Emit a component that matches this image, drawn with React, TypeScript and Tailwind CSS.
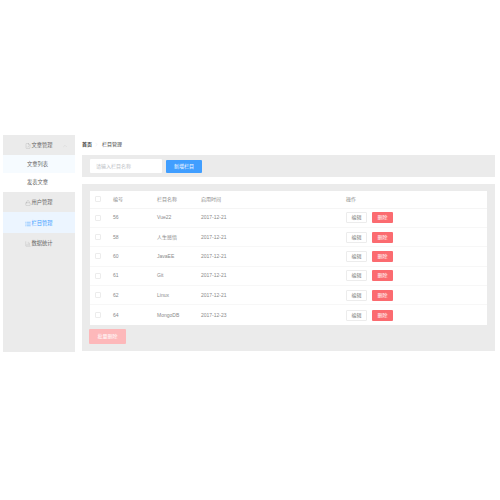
import React from 'react';
import { ChevronUp, ChevronRight, FileCheck, Lock, List, BarChart3 } from 'lucide-react';

const rows = [
    { id: 56, name: 'Vue22', date: '2017-12-21' },
    { id: 58, name: '人生感悟', date: '2017-12-21' },
    { id: 60, name: 'JavaEE', date: '2017-12-21' },
    { id: 61, name: 'Git', date: '2017-12-21' },
    { id: 62, name: 'Linux', date: '2017-12-21' },
    { id: 64, name: 'MongoDB', date: '2017-12-23' },
];

const Checkbox = () => <span className="block w-[6px] h-[6px] rounded-[1px] border-[0.5px] border-[#ececec] bg-white" />;

const App = () => {
    return (
        <div className="w-[500px] h-[500px] bg-white flex items-start pt-[135px] pl-[3px] text-[5px] leading-none text-[#8a8a8a] font-['Liberation_Sans','Noto_Sans_CJK_SC',sans-serif]">
            {/* Sidebar */}
            <aside className="w-[72px] h-[217px] shrink-0 bg-[#ebebeb] text-[5.25px] text-[#666]">
                <div className="h-[20px] pt-[1px] relative flex items-center justify-center gap-[1px] pr-[1px]">
                    <FileCheck size={6} strokeWidth={1} className="text-[#999]" />
                    <span>文章管理</span>
                    <ChevronUp size={6} strokeWidth={1} className="absolute right-[7px] text-[#bbb]" />
                </div>
                <div className="h-[18px] pt-[1px] flex items-center justify-center bg-[#f6fbff] pr-[3px]">文章列表</div>
                <div className="h-[19px] pt-[1px] flex items-center justify-center bg-white pr-[3px]">发表文章</div>
                <div className="h-[20px] pt-[1px] flex items-center justify-center gap-[1px] pr-[1px]">
                    <Lock size={6} strokeWidth={1} className="text-[#999]" />
                    <span>用户管理</span>
                </div>
                <div className="h-[21px] pt-[2px] flex items-center justify-center gap-[1px] bg-[#ecf5ff] text-[#409eff] pr-[1px]">
                    <List size={6} strokeWidth={2} />
                    <span>栏目管理</span>
                </div>
                <div className="h-[20px] pt-[1px] flex items-center justify-center gap-[1px] pr-[1px]">
                    <BarChart3 size={6} strokeWidth={1} className="text-[#999]" />
                    <span>数据统计</span>
                </div>
            </aside>

            {/* Main */}
            <main className="w-[413px] ml-[7px] shrink-0">
                <div className="h-[20px] flex items-center pb-[1px] text-[#444]">
                    <span className="font-bold w-[12px]">首页</span>
                    <ChevronRight size={5} strokeWidth={1} className="text-[#c0c4cc] mr-[3px]" />
                    <span>栏目管理</span>
                </div>

                <div className="h-[22px] bg-[#ebebeb] flex items-center pl-[8px] gap-[4px]">
                    <div className="w-[72px] h-[14px] bg-white rounded-[1px] flex items-center pl-[6px] text-[#bbbec4]">请输入栏目名称</div>
                    <button className="w-[36px] h-[13px] bg-[#409eff] rounded-[1px] text-white flex items-center justify-center">新增栏目</button>
                </div>

                <div className="mt-[7px] h-[167px] bg-[#ebebeb] pt-[7px] pl-[8px] pr-[8px]">
                    <div className="bg-white">
                        <div className="h-[17.5px] flex items-center border-b-[0.5px] border-[#f5f5f5]">
                            <div className="w-[23px] pl-[5px]"><Checkbox /></div>
                            <div className="w-[44px]">编号</div>
                            <div className="w-[44px]">栏目名称</div>
                            <div className="w-[145px]">启用时间</div>
                            <div>操作</div>
                        </div>
                        {rows.map((row) => (
                            <div key={row.id} className="h-[19.4px] flex items-center border-b-[0.5px] border-[#f7f7f7] last:border-b-0">
                                <div className="w-[23px] pl-[5px]"><Checkbox /></div>
                                <div className="w-[44px]">{row.id}</div>
                                <div className="w-[44px]">{row.name}</div>
                                <div className="w-[145px]">{row.date}</div>
                                <div className="flex gap-[5px]">
                                    <button className="w-[21px] h-[11px] bg-white border-[0.5px] border-[#ececec] rounded-[1px] text-[#777] flex items-center justify-center">编辑</button>
                                    <button className="w-[21px] h-[11px] bg-[#fb6b70] rounded-[1px] text-white flex items-center justify-center">删除</button>
                                </div>
                            </div>
                        ))}
                    </div>
                    <button className="mt-[4px] -ml-[1px] w-[37px] h-[15px] bg-[#fdb8ba] rounded-[1px] text-white flex items-center justify-center">批量删除</button>
                </div>
            </main>
        </div>
    );
};

export default App;
